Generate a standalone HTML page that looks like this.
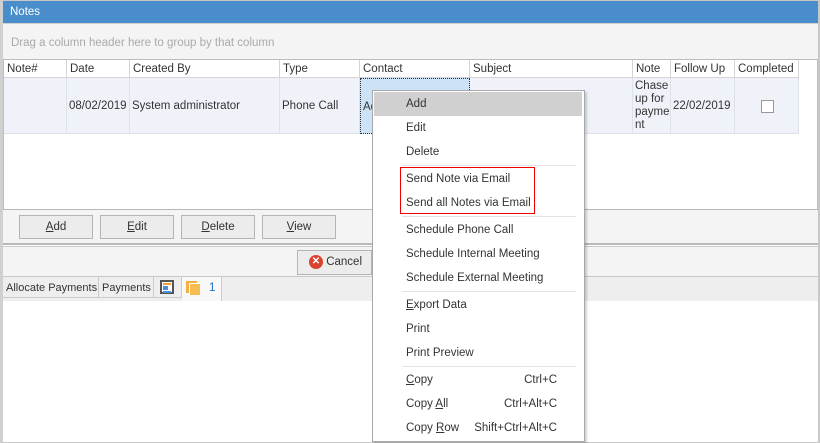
<!DOCTYPE html>
<html><head><meta charset="utf-8"><style>
*{box-sizing:border-box;margin:0;padding:0}
body{width:820px;height:443px;overflow:hidden;background:#fff;font-family:"Liberation Sans",sans-serif;font-size:11.5px;color:#333;position:relative}
.a{position:absolute;white-space:nowrap}
.hd{position:absolute;top:60px;height:18px;border-right:1px solid #d4d4d4;border-bottom:1px solid #d4d4d4;padding:3px 0 0 3px;white-space:nowrap;background:#fff}
.cl{position:absolute;top:78px;height:56px;border-right:1px solid #dde2ea;border-bottom:1px solid #dde2ea;background:#eff3f9;padding:1px 0 0 2px;display:flex;align-items:center;white-space:nowrap}
.btn{position:absolute;top:215px;width:74px;height:24px;border:1px solid #b4b4b4;background:#ececec;text-align:center;line-height:23px}
.mi{position:absolute;left:406px;white-space:nowrap}
.sep{position:absolute;left:402px;width:174px;height:1px;background:#e2e2e2}
.sc{position:absolute;right:263px;white-space:nowrap}
u{text-decoration:underline}
</style></head><body>
<div class="a" style="left:0;top:0;width:820px;height:443px;border:1px solid #c8c8c8;border-left:3px solid #d0d0d0;border-right:2px solid #c8c8c8"></div>
<div class="a" style="left:3px;top:1px;width:815px;height:22px;background:#4a8dcb;color:#fff;padding:5px 0 0 7px">Notes</div>
<div class="a" style="left:3px;top:23px;width:815px;height:37px;background:#f4f4f4;border-top:1px solid #d0d0d0;color:#aaa;padding:13px 0 0 8px">Drag a column header here to group by that column</div>
<div class="a" style="left:3px;top:59px;width:815px;height:151px;border:1px solid #bcbcbc;background:#fff"></div>
<div class="hd" style="left:4px;width:63px">Note#</div>
<div class="hd" style="left:67px;width:63px">Date</div>
<div class="hd" style="left:130px;width:150px">Created By</div>
<div class="hd" style="left:280px;width:80px">Type</div>
<div class="hd" style="left:360px;width:110px">Contact</div>
<div class="hd" style="left:470px;width:163px">Subject</div>
<div class="hd" style="left:633px;width:38px">Note</div>
<div class="hd" style="left:671px;width:64px">Follow Up</div>
<div class="hd" style="left:735px;width:64px">Completed</div>
<div class="cl" style="left:4px;width:63px"></div>
<div class="cl" style="left:67px;width:63px">08/02/2019</div>
<div class="cl" style="left:130px;width:150px">System administrator</div>
<div class="cl" style="left:280px;width:80px">Phone Call</div>
<div class="cl" style="left:360px;width:110px;background:#cce3f7;border:1px dotted #333">Ad</div>
<div class="cl" style="left:470px;width:163px"></div>
<div class="cl" style="left:633px;width:38px;white-space:normal;line-height:13px;word-break:break-all;align-items:center">Chase up for payme nt</div>
<div class="cl" style="left:671px;width:64px">22/02/2019</div>
<div class="cl" style="left:735px;width:64px;justify-content:center"><div style="width:13px;height:13px;border:1px solid #999;background:#fff"></div></div>
<div class="a" style="left:3px;top:209px;width:815px;height:36px;background:#f4f4f4;border-top:1px solid #b8b8b8;border-bottom:2px solid #b8b8b8"></div>
<div class="btn" style="left:19px"><u>A</u>dd</div>
<div class="btn" style="left:100px"><u>E</u>dit</div>
<div class="btn" style="left:181px"><u>D</u>elete</div>
<div class="btn" style="left:262px"><u>V</u>iew</div>
<div class="a" style="left:3px;top:246px;width:815px;height:31px;background:#f4f4f4;border-top:1px solid #c8c8c8;border-bottom:1px solid #c8c8c8"></div>
<div class="a" style="left:297px;top:250px;width:75px;height:25px;border:1px solid #b4b4b4;background:#ececec;padding:4px 0 0 11px"><span style="display:inline-block;width:14px;height:14px;border-radius:50%;background:#d9432f;color:#fff;font-size:10px;line-height:14px;text-align:center;font-weight:bold;vertical-align:middle">✕</span> <span style="vertical-align:middle">Cancel</span></div>
<div class="a" style="left:3px;top:277px;width:815px;height:24px;background:#eeeeee"></div>
<div class="a" style="left:3px;top:277px;width:96px;height:21px;border-right:1px solid #ccc;border-bottom:1px solid #ccc;padding:5px 0 0 3px;font-size:11px">Allocate Payments</div>
<div class="a" style="left:99px;top:277px;width:55px;height:21px;border-right:1px solid #ccc;border-bottom:1px solid #ccc;padding:5px 0 0 3px;font-size:11px">Payments</div>
<div class="a" style="left:154px;top:277px;width:28px;height:21px;border-right:1px solid #ccc;border-bottom:1px solid #ccc"><div style="position:absolute;left:6px;top:3px;width:14px;height:14px;border:2px solid #555;background:#fff"><div style="position:absolute;left:1px;top:1px;width:8px;height:2px;background:#f0a030"></div><div style="position:absolute;left:1px;top:4px;width:5px;height:4px;background:#4a90d9"></div><div style="position:absolute;left:1px;top:9px;width:8px;height:2px;background:#4a90d9"></div></div></div>
<div class="a" style="left:182px;top:277px;width:40px;height:24px;background:#f8f8f8;border-right:1px solid #ccc"><div style="position:absolute;left:4px;top:4px;width:11px;height:12px;background:#f5b040"></div><div style="position:absolute;left:7px;top:6px;width:11px;height:12px;background:#f7bc52;border-left:1px solid #fff;border-top:1px solid #fff"></div><span style="position:absolute;left:27px;top:5px;color:#1b6fc0">1</span></div>
<div class="a" style="left:372px;top:90px;width:213px;height:352px;background:#fff;border:1px solid #a8a8a8;box-shadow:2px 2px 2px rgba(0,0,0,.18)"></div>
<div class="a" style="left:374px;top:92px;width:208px;height:24px;background:#d0d0d0"></div>
<div class="mi" style="top:98px">Add</div>
<div class="mi" style="top:122px">Edit</div>
<div class="mi" style="top:146px">Delete</div>
<div class="sep" style="top:165px"></div>
<div class="mi" style="top:173px">Send Note via Email</div>
<div class="mi" style="top:197px">Send all Notes via Email</div>
<div class="a" style="left:400px;top:167px;width:135px;height:47px;border:1px solid #e00"></div>
<div class="sep" style="top:216px"></div>
<div class="mi" style="top:224px">Schedule Phone Call</div>
<div class="mi" style="top:248px">Schedule Internal Meeting</div>
<div class="mi" style="top:272px">Schedule External Meeting</div>
<div class="sep" style="top:291px"></div>
<div class="mi" style="top:299px"><u>E</u>xport Data</div>
<div class="mi" style="top:323px">Print</div>
<div class="mi" style="top:347px">Print Preview</div>
<div class="sep" style="top:366px"></div>
<div class="mi" style="top:374px"><u>C</u>opy</div>
<div class="sc" style="top:374px">Ctrl+C</div>
<div class="mi" style="top:398px">Copy <u>A</u>ll</div>
<div class="sc" style="top:398px">Ctrl+Alt+C</div>
<div class="mi" style="top:422px">Copy <u>R</u>ow</div>
<div class="sc" style="top:422px">Shift+Ctrl+Alt+C</div>
</body></html>
